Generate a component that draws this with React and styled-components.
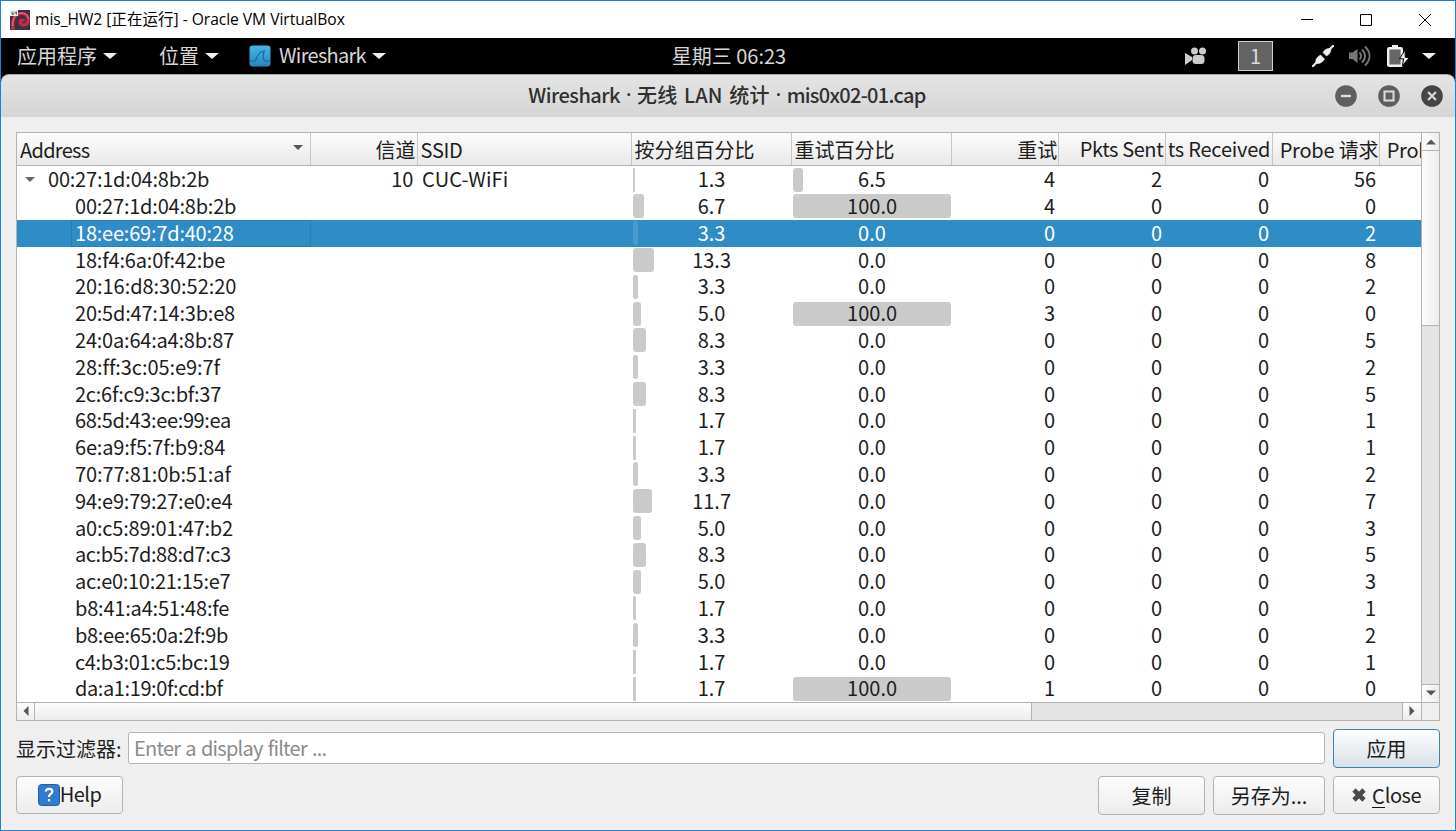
import React from "react";
import styled, { createGlobalStyle, css } from "styled-components";

const Global = createGlobalStyle`
  * { box-sizing: border-box; }
  body { margin: 0; }
`;

const Frame = styled.div`
  width: 1456px;
  height: 831px;
  display: flex;
  flex-direction: column;
  overflow: hidden;
  border: 1px solid #1b7fd3;
  background: #efefef;
  color: #1d1d1d;
  font: 20px/26px "Noto Sans CJK SC", sans-serif;
  white-space: nowrap;
`;

const HostBar = styled.header`
  height: 37px;
  flex: none;
  display: flex;
  align-items: center;
  padding: 0 24px 0 9px;
  background: #fff;
  color: #000;
`;
const HostTitle = styled.span`
  margin: -1px auto 0 5px;
  font: 15.6px/22px "Open Sans", "Noto Sans CJK SC", sans-serif;
  letter-spacing: -0.03px;
`;
const HostButtons = styled.div`
  display: flex;
  gap: 47px;
  svg { display: block; }
`;

const Panel = styled.div`
  height: 36px;
  flex: none;
  display: flex;
  align-items: center;
  background: #000;
  color: #d6d6d6;
`;
const PanelSide = styled.div`
  flex: 1;
  display: flex;
  align-items: center;
  justify-content: ${(p) => (p.$end ? "flex-end" : "flex-start")};
  padding: 0 ${(p) => (p.$end ? 19 : 0)}px 0 ${(p) => (p.$end ? 0 : 16)}px;
  svg { display: block; flex: none; }
`;
const Menu = styled.div`
  display: flex;
  align-items: center;
  gap: 6px;
  margin-right: ${(p) => p.$after}px;
`;
const Latin = styled.span`
  letter-spacing: ${(p) => p.$spacing}px;
  word-spacing: ${(p) => p.$words || 0}px;
  padding-bottom: ${(p) => p.$lift || 0}px;
`;
const Clock = styled.span`
  padding-left: 5px;
`;
const Caret = styled.i`
  width: 0;
  height: 0;
  border: 7px solid transparent;
  border-top: 6.5px solid #f0f0f0;
  border-bottom: 0;
`;
const Workspace = styled.div`
  width: 35px;
  height: 30px;
  margin: 0 39px 1px 31px;
  border: 1px solid #ccc;
  background: #646464;
  color: #ddd;
  text-align: center;
  line-height: 27px;
`;

const WindowBar = styled.div`
  height: 43px;
  flex: none;
  display: flex;
  align-items: center;
  background: linear-gradient(#e4e4e4, #d5d5d5);
  border-top: 1px solid #a9a9a9;
  border-radius: 8px 8px 0 0;
`;
const WindowBack = styled.div`
  flex: none;
  background: #000;
`;
const WindowTitle = styled.div`
  flex: 1;
  display: flex;
  justify-content: center;
  align-items: center;
  gap: 6px;
  padding: 0 0 2px 118px;
  font-weight: 500;
  color: #303030;
`;
const TitleDot = styled.span`
  width: 5px;
  text-align: center;
  font-family: "Noto Sans", sans-serif;
`;
const WindowButtons = styled.div`
  display: flex;
  gap: 21px;
  padding-right: 12px;
  svg { display: block; }
`;

const Content = styled.main`
  flex: 1;
  min-height: 0;
  padding: 15px 15px 0 15px;
`;
const Tree = styled.section`
  height: 589px;
  display: grid;
  grid-template-columns: 1404px 18px;
  grid-template-rows: 568.500px 18.500px;
  border: 1px solid #b3b3b3;
  background: #fff;
`;
const View = styled.div`
  overflow: hidden;
`;
const columns = "293.6px 107px 214px 160px 160.7px 107px 107px 107px 107px 107px";
const Header = styled.div`
  display: grid;
  grid-template-columns: ${columns};
  height: 33px;
  background: linear-gradient(#fcfcfc, #e9e9e9);
  border-bottom: 1px solid #b3b3b3;
`;
const HeadCell = styled.div`
  display: flex;
  align-items: center;
  justify-content: ${(p) => (p.$end ? "flex-end" : "flex-start")};
  padding: ${(p) => (p.$latin ? 0 : 2)}px ${(p) => (p.$latin ? 2 : 1)}px 0 3px;
  border-right: 1px solid #c6c6c6;
  overflow: hidden;
  letter-spacing: ${(p) => p.$spacing || 0}px;
`;
const HeadText = styled.span`
  display: flex;
  justify-content: flex-end;
  min-width: 0;
  overflow: hidden;
  white-space: pre;
`;
const SortMark = styled.i`
  margin: -5px 6px 0 auto;
  border: 5px solid transparent;
  border-top: 5px solid #555;
  border-bottom: 0;
`;
const Rows = styled.div`
  display: grid;
  grid-auto-rows: 26.8px;
  padding-top: 0.2px;
`;
const Row = styled.div`
  display: grid;
  grid-template-columns: ${columns};
  line-height: 26.8px;
  ${(p) => p.$selected && css`
    background: #308cc6;
    color: #fff;
  `}
`;
const Address = styled.div`
  display: flex;
  align-items: center;
  margin-left: ${(p) => (p.$child ? 54 : 0)}px;
  padding-left: ${(p) => (p.$child ? 4 : 8)}px;
  letter-spacing: ${(p) => p.$spacing}px;
  ${(p) => p.$selected && css`
    box-shadow: inset 0 0 0 1px #2a7eb3;
  `}
`;
const Expander = styled.i`
  margin-right: 13px;
  border: 5px solid transparent;
  border-top: 5px solid #666;
  border-bottom: 0;
`;
const Num = styled.div`
  text-align: right;
  padding-right: 4.200px;
`;
const Ssid = styled.div`
  padding-left: 4.500px;
  letter-spacing: 0.1px;
`;
const Percent = styled.div`
  display: grid;
  padding: 0 1.500px 0 1.500px;
  text-align: center;
  > * { grid-area: 1 / 1; }
`;
const Bar = styled.i`
  align-self: center;
  height: 24px;
  border-radius: ${(p) => (p.$thin ? 1 : 3)}px;
  background: ${(p) => (p.$selected ? "#4a9bce" : "#cacaca")};
`;
const Value = styled.span`
  position: relative;
`;

const VScroll = styled.div`
  display: grid;
  grid-template-rows: 18px 175px 1fr 18px;
  border-left: 1px solid #b3b3b3;
  background: #e4e4e4;
`;
const HScroll = styled.div`
  display: grid;
  grid-template-columns: 18px 997px 1fr 19px;
  border-top: 1px solid #b3b3b3;
  background: #e4e4e4;
`;
const ScrollPart = styled.div`
  display: grid;
  place-items: center;
  background: linear-gradient(${(p) => (p.$across ? "90deg" : "180deg")}, #fcfcfc, #ededed);
  border: 0 solid #b3b3b3;
  border-width: ${(p) => p.$edges};
`;
const Corner = styled.div`
  border: solid #b3b3b3;
  border-width: 1px 0 0 1px;
  background: #efefef;
`;
const ArrowSvg = styled.svg`
  display: block;
  transform: rotate(${(p) => p.$turn}deg);
`;

const FilterRow = styled.div`
  display: flex;
  align-items: center;
  margin-top: 8px;
`;
const FilterLabel = styled.label`
  width: 112px;
  flex: none;
`;
const FilterField = styled.div`
  flex: 1;
  height: 32px;
  margin: 0 8px 1px 0;
  padding-left: 5px;
  border: 1px solid #b3b3b3;
  border-radius: 3px;
  background: #fff;
  color: #8b8b8b;
  line-height: 29px;
  letter-spacing: -0.75px;
  word-spacing: 1.300px;
`;
const Actions = styled.div`
  display: flex;
  align-items: flex-start;
  gap: 8px;
  margin-top: 8px;
`;
const Button = styled.button`
  display: flex;
  align-items: center;
  justify-content: center;
  width: ${(p) => p.$w || 107}px;
  height: ${(p) => p.$h || 39}px;
  margin: 0 ${(p) => (p.$push ? "auto" : 0)} 0 0;
  padding: 0;
  border: 1px solid ${(p) => (p.$primary ? "#3f83ac" : "#b3b3b3")};
  border-radius: 4px;
  background: ${(p) => (p.$primary ? "linear-gradient(#fcfdfd, #d9e2e8)" : "linear-gradient(#fdfdfd, #ececec)")};
  color: #1d1d1d;
  font: inherit;
`;
const Mnemonic = styled.span`
  height: 25px;
  line-height: 25px;
  border-bottom: 1px solid #111;
`;

const data = [
  ["00:27:1d:04:8b:2b", 1.3, 6.5, 4, 2, 0, 56],
  ["00:27:1d:04:8b:2b", 6.7, 100, 4, 0, 0, 0],
  ["18:ee:69:7d:40:28", 3.3, 0, 0, 0, 0, 2],
  ["18:f4:6a:0f:42:be", 13.3, 0, 0, 0, 0, 8],
  ["20:16:d8:30:52:20", 3.3, 0, 0, 0, 0, 2],
  ["20:5d:47:14:3b:e8", 5, 100, 3, 0, 0, 0],
  ["24:0a:64:a4:8b:87", 8.3, 0, 0, 0, 0, 5],
  ["28:ff:3c:05:e9:7f", 3.3, 0, 0, 0, 0, 2],
  ["2c:6f:c9:3c:bf:37", 8.3, 0, 0, 0, 0, 5],
  ["68:5d:43:ee:99:ea", 1.7, 0, 0, 0, 0, 1],
  ["6e:a9:f5:7f:b9:84", 1.7, 0, 0, 0, 0, 1],
  ["70:77:81:0b:51:af", 3.3, 0, 0, 0, 0, 2],
  ["94:e9:79:27:e0:e4", 11.7, 0, 0, 0, 0, 7],
  ["a0:c5:89:01:47:b2", 5, 0, 0, 0, 0, 3],
  ["ac:b5:7d:88:d7:c3", 8.3, 0, 0, 0, 0, 5],
  ["ac:e0:10:21:15:e7", 5, 0, 0, 0, 0, 3],
  ["b8:41:a4:51:48:fe", 1.7, 0, 0, 0, 0, 1],
  ["b8:ee:65:0a:2f:9b", 3.3, 0, 0, 0, 0, 2],
  ["c4:b3:01:c5:bc:19", 1.7, 0, 0, 0, 0, 1],
  ["da:a1:19:0f:cd:bf", 1.7, 100, 1, 0, 0, 0],
];

function addressSpacing(address) {
  const wide = (address.match(/[a-e]/g) || []).length;
  const narrow = (address.match(/f/g) || []).length;
  return -0.15 + (2.8 - 1.3 * wide + 0.3 * narrow) / 17;
}

function PercentCell({ value, selected }) {
  const width = value * 1.58;
  return (
    <Percent>
      {value > 0 && <Bar $selected={selected} $thin={width < 5} style={{ width: Math.max(width, 2) }} />}
      <Value>{value.toFixed(1)}</Value>
    </Percent>
  );
}

function Arrow({ turn }) {
  return (
    <ArrowSvg $turn={turn} width="10" height="10" viewBox="0 0 10 10">
      <path d="M0 2.5h10L5 7.5z" fill="#555" />
    </ArrowSvg>
  );
}

function KaliIcon() {
  return (
    <svg width="20" height="20" viewBox="0 0 20 20">
      <rect width="20" height="20" fill="#34363f" />
      <path d="M3.500 20C1 10 5 3.500 11.500 3.500c5 0 7.500 3.500 6.500 8-1 4-7.500 4.500-7.800.8-.2-2.600 3.300-3 3.800-1" fill="none" stroke="#d02448" strokeWidth="3.200" />
      <path d="M2.800 16C2 8 6.500 3 12 3c4.500 0 6.500 3 6.300 6" fill="none" stroke="#f77b8c" strokeWidth="1" />
      <rect width="8" height="6" fill="#eee" />
      <path d="M2 1.500v3h1.500v-1.500h-1.500M5 1.500v1.700h1.500M6.500 1.500v3.300" stroke="#555" strokeWidth=".8" fill="none" />
    </svg>
  );
}

function SharkIcon() {
  return (
    <svg width="22" height="22" viewBox="0 0 22 22">
      <defs>
        <linearGradient id="shark" x2="0" y2="1">
          <stop stopColor="#45b5e8" />
          <stop offset="1" stopColor="#2888bd" />
        </linearGradient>
      </defs>
      <rect x=".5" y=".5" width="21" height="21" rx="3" fill="url(#shark)" />
      <path d="M1 16h5c2 0 .5-9 9.500-10-2 3-1.500 10 1 10h4.500" fill="none" stroke="#1d6c9a" strokeWidth="1.200" />
    </svg>
  );
}

export default function App() {
  return (
    <Frame>
      <Global />
      <HostBar>
        <KaliIcon />
        <HostTitle>mis_HW2 [正在运行] - Oracle VM VirtualBox</HostTitle>
        <HostButtons>
          <svg width="12" height="12"><path d="M0 5.500h12" stroke="#000" /></svg>
          <svg width="12" height="12"><path d="M.5.5h11v11H.5z" fill="none" stroke="#000" /></svg>
          <svg width="12" height="12"><path d="M0 0l12 12M12 0L0 12" stroke="#000" /></svg>
        </HostButtons>
      </HostBar>

      <Panel>
        <PanelSide>
          <Menu $after={42}>应用程序<Caret /></Menu>
          <Menu $after={30}>位置<Caret /></Menu>
          <Menu $after={0}><SharkIcon /><Latin $spacing={-0.7} $lift={2} style={{ marginLeft: 2 }}>Wireshark</Latin><Caret /></Menu>
        </PanelSide>
        <Clock>星期三 06:23</Clock>
        <PanelSide $end>
          <svg width="22" height="18" viewBox="0 0 22 18" fill="#ccc">
            <path d="M0 6l7 4v3l-7 5z" />
            <circle cx="9.500" cy="4" r="3.500" /><circle cx="17.500" cy="4" r="3.500" />
            <rect x="7.500" y="8" width="12" height="9" rx="3.500" />
          </svg>
          <Workspace>1</Workspace>
          <svg width="22" height="22" viewBox="0 0 22 22" stroke="#f0f0f0" fill="#f0f0f0">
            <path d="M.8 21.200L5 17M17 5L21.200.8" strokeWidth="2" strokeLinecap="round" />
            <path d="M4 17.500c-1-3 1.500-6 4.500-7.500l4 4c-1.500 3-4.500 5-7.500 4.500zM11 7.500c1.500-3 4.500-4.500 7.500-4 1 3-1 6-4 7.500z" strokeWidth=".6" />
          </svg>
          <svg width="22" height="22" viewBox="0 0 22 22" style={{ marginLeft: 15 }} fill="none" stroke="#777" strokeWidth="2">
            <path d="M0 7.500h3.500L8.500 4v14l-5-4H0z" fill="#777" stroke="none" />
            <path d="M10.500 7.500c2 2 2 5 0 7M13 4.500c4 4 4 9 0 13M16 1.500c6 6 6 13 0 19" />
          </svg>
          <svg width="23" height="22" viewBox="0 0 23 22" style={{ marginLeft: 16 }}>
            <path d="M5 0h6v3H5z" fill="#f0f0f0" />
            <rect x="1.200" y="3.200" width="13.600" height="17.600" rx="1" fill="#666" stroke="#f0f0f0" strokeWidth="2.400" />
            <path d="M18 5L12.500 13.800h4L15.500 20.500 22.500 12.500H18.300z" fill="#f0f0f0" stroke="#000" strokeWidth="1" />
          </svg>
          <Caret style={{ marginLeft: 12 }} />
        </PanelSide>
      </Panel>

      <WindowBack>
        <WindowBar>
          <WindowTitle>
            <Latin $spacing={-0.5}>Wireshark</Latin>
            <TitleDot>·</TitleDot>
            <Latin $spacing={0.15} $words={2}>无线 LAN 统计</Latin>
            <TitleDot>·</TitleDot>
            <Latin $spacing={-0.7}>mis0x02-01.cap</Latin>
          </WindowTitle>
          <WindowButtons>
            <svg width="22" height="22"><circle cx="11" cy="11" r="10.800" fill="#5f5f5f" /><path d="M6 11h10" stroke="#ddd" strokeWidth="2.400" /></svg>
            <svg width="22" height="22"><circle cx="11" cy="11" r="10.800" fill="#5f5f5f" /><path d="M6.500 6.500h9v9h-9z" stroke="#ddd" strokeWidth="2" fill="none" /></svg>
            <svg width="22" height="22"><circle cx="11" cy="11" r="10.800" fill="#454545" /><path d="M7 7l8 8M15 7l-8 8" stroke="#ddd" strokeWidth="2" /></svg>
          </WindowButtons>
        </WindowBar>
      </WindowBack>

      <Content>
        <Tree>
          <View>
            <Header>
              <HeadCell $spacing={-0.7}>Address<SortMark /></HeadCell>
              <HeadCell $end>信道</HeadCell>
              <HeadCell $spacing={-0.3}>SSID</HeadCell>
              <HeadCell>按分组百分比</HeadCell>
              <HeadCell>重试百分比</HeadCell>
              <HeadCell $end>重试</HeadCell>
              <HeadCell $end $latin $spacing={-0.4}>Pkts Sent</HeadCell>
              <HeadCell $end $latin $spacing={-0.2}><HeadText>Pkts Received</HeadText></HeadCell>
              <HeadCell $end $spacing={-0.2}>Probe 请求</HeadCell>
              <HeadCell $end $spacing={-0.2}>Probe 响应</HeadCell>
            </Header>
            <Rows>
              {data.map(([address, packets, retryPct, ...counts], i) => {
                const selected = i === 2;
                return (
                  <Row key={i} $selected={selected}>
                    <Address $child={i > 0} $selected={selected} $spacing={addressSpacing(address)}>
                      {i === 0 && <Expander />}
                      {address}
                    </Address>
                    <Num>{i === 0 ? "10" : ""}</Num>
                    <Ssid>{i === 0 ? "CUC-WiFi" : ""}</Ssid>
                    <PercentCell value={packets} selected={selected} />
                    <PercentCell value={retryPct} selected={selected} />
                    {counts.map((n, k) => <Num key={k}>{n}</Num>)}
                  </Row>
                );
              })}
            </Rows>
          </View>
          <VScroll>
            <ScrollPart $across $edges="0 0 1px 0"><Arrow turn={180} /></ScrollPart>
            <ScrollPart $across $edges="0 0 1px 0" />
            <span />
            <ScrollPart $across $edges="1px 0 0 0"><Arrow turn={0} /></ScrollPart>
          </VScroll>
          <HScroll>
            <ScrollPart $edges="0 1px 0 0"><Arrow turn={90} /></ScrollPart>
            <ScrollPart $edges="0 1px 0 0" />
            <span />
            <ScrollPart $edges="0 0 0 1px"><Arrow turn={-90} /></ScrollPart>
          </HScroll>
          <Corner />
        </Tree>

        <FilterRow>
          <FilterLabel>显示过滤器:</FilterLabel>
          <FilterField>Enter a display filter ...</FilterField>
          <Button $primary>应用</Button>
        </FilterRow>

        <Actions>
          <Button $h={38} $push>
            <svg width="22" height="22" viewBox="0 0 22 22">
              <rect x=".5" y=".5" width="21" height="21" rx="3" fill="#2f7bd0" stroke="#1f5ea8" />
              <path d="M7.800 7.500c.4-3.500 6.500-3.500 6.500 0 0 2.500-3.300 2.500-3.300 5.500M11 15v2.500" fill="none" stroke="#fff" strokeWidth="2.200" />
            </svg>
            <Latin $spacing={-0.5} $lift={2}>Help</Latin>
          </Button>
          <Button>复制</Button>
          <Button $w={112}>另存为...</Button>
          <Button $h={38}>
            <svg width="14" height="14" viewBox="0 0 14 14" style={{ marginRight: 6 }}>
              <path d="M2 2l10 10M12 2L2 12" stroke="#4a4a4a" strokeWidth="4.600" />
            </svg>
            <Mnemonic>C</Mnemonic><Latin $spacing={-0.5} $lift={1}>lose</Latin>
          </Button>
        </Actions>
      </Content>
    </Frame>
  );
}
